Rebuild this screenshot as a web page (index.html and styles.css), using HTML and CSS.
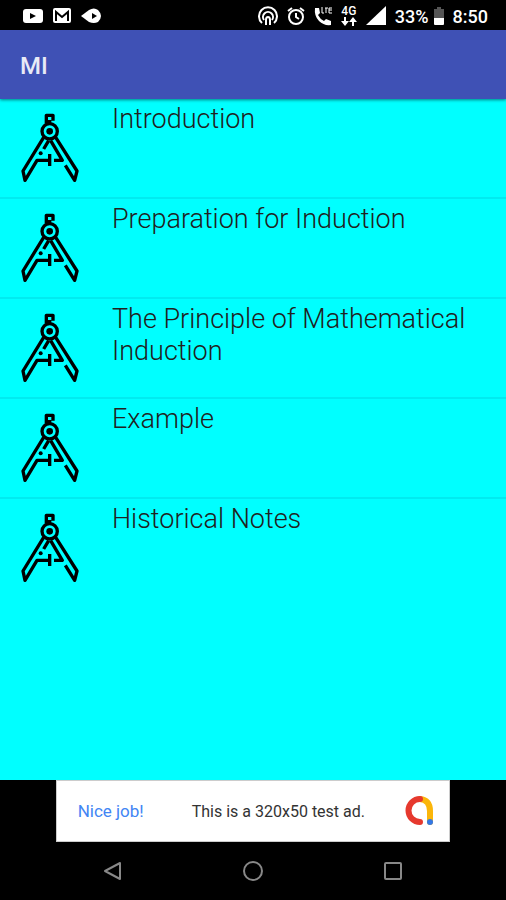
FILE: index.html
```
<!DOCTYPE html>
<html lang="en">

<head>
    <meta charset="utf-8">
    <meta name="viewport" content="width=device-width, initial-scale=1">
    <title>MI</title>
    <link rel="stylesheet" href="styles.css">
</head>

<body>
    <svg class="sprite" aria-hidden="true">
        <symbol id="compass" viewBox="60 36 180 216">
            <g fill="none" stroke="#000" stroke-width="10" stroke-linejoin="round">
                <path d="M139 71V46H159V62M149 60V70" />
                <circle cx="149" cy="94" r="23" />
                <path d="M131 112L69 213L75 241L111 181H149" />
                <path d="M167 112L231 213L224 241L196 196" />
                <path d="M146 122L131 147M152 122L187 181H162M149 162V198" />
            </g>
            <circle cx="149" cy="94" r="10" />
            <circle cx="122" cy="160" r="6" />
        </symbol>
    </svg>

    <div class="status">
        <div class="icons left">
            <svg width="20" height="16" viewBox="0 0 20 16">
                <rect y="1" width="20" height="14" rx="3" fill="#fff" />
                <path d="M7 5L13 8L7 11Z" fill="#000" />
            </svg>
            <svg width="18" height="16" viewBox="0 0 18 16">
                <rect width="18" height="15" rx="2" fill="#fff" />
                <path d="M3 13V4L9 9L15 4V13" fill="none" stroke="#000" stroke-width="2" />
            </svg>
            <svg width="20" height="16" viewBox="0 0 20 16">
                <path d="M0 8L8 2Q13-1 17 2Q20 5 20 8Q20 11 17 14Q13 16 8 14Z" fill="#fff" />
                <path d="M11 5L16 8L11 11Z" fill="#000" />
            </svg>
        </div>
        <div class="icons right">
            <svg width="20" height="20" viewBox="0 0 20 20" fill="none" stroke="#fff" stroke-width="2">
                <path d="M4 17A9 9 0 1 1 16 17M6 14A5 5 0 1 1 14 14" />
                <path d="M8 19V14Q8 11 10 11Q12 11 12 14V19" />
            </svg>
            <svg width="18" height="20" viewBox="0 0 18 20" fill="none" stroke="#fff" stroke-width="2">
                <circle cx="9" cy="11" r="7" />
                <path d="M9 7V11L12 13M1 5L5 2M17 5L13 2" />
            </svg>
            <svg width="18" height="20" viewBox="0 0 18 20">
                <path d="M1 2H5L6 7L4 9Q6 13 10 15L12 13L17 15V19Q10 20 5 15T1 2Z" fill="#fff" />
                <path d="M8 1V7H10M11 2H14M12 2V7M18 2H15V7H18M15 4H18" fill="none" stroke="#fff" />
            </svg>
            <div class="net">
                <span>4G</span>
                <svg width="16" height="9" viewBox="0 0 16 9">
                    <path d="M3 0H5V4H8L4 9L0 4H3ZM11 9H13V5H16L12 0L8 5H11Z" fill="#fff" />
                </svg>
            </div>
            <svg width="20" height="20" viewBox="0 0 20 20">
                <path d="M0 19L20 0V19Z" fill="#fff" />
            </svg>
            <span class="battery">33%</span>
            <svg width="10" height="20" viewBox="0 0 10 20">
                <path d="M3 1H7V3H10V12H0V3H3Z" fill="#555" />
                <path d="M0 12H10V18Q10 19 9 19H1Q0 19 0 18Z" fill="#fff" />
            </svg>
            <span class="time">8:50</span>
        </div>
    </div>

    <header class="bar">
        <h1>MI</h1>
    </header>

    <main>
        <ul class="topics">
            <li><svg class="compass"><use href="#compass" /></svg><a href="#">Introduction</a></li>
            <li><svg class="compass"><use href="#compass" /></svg><a href="#">Preparation for Induction</a></li>
            <li><svg class="compass"><use href="#compass" /></svg><a href="#">The Principle of Mathematical Induction</a></li>
            <li><svg class="compass"><use href="#compass" /></svg><a href="#">Example</a></li>
            <li><svg class="compass"><use href="#compass" /></svg><a href="#">Historical Notes</a></li>
        </ul>
    </main>

    <div class="ad">
        <div class="banner">
            <span class="nice">Nice job!</span>
            <span class="message">This is a 320x50 test ad.</span>
            <svg class="logo" width="30" height="30" viewBox="0 0 30 30" fill="none" stroke-linecap="round">
                <path d="M16 3Q26 4 26 15V26" stroke="#fbb60a" stroke-width="6" />
                <path d="M16 3A11 11 0 1 0 16 26" stroke="#e6392e" stroke-width="6" />
                <circle cx="26" cy="26" r="3" fill="#3478e5" />
            </svg>
        </div>
    </div>

    <nav class="keys">
        <button aria-label="Back">
            <svg width="20" height="20" viewBox="0 0 20 20"><path d="M17 2V18L2 10Z" /></svg>
        </button>
        <button aria-label="Home">
            <svg width="20" height="20" viewBox="0 0 20 20"><circle cx="10" cy="10" r="9" /></svg>
        </button>
        <button aria-label="Recent apps">
            <svg width="20" height="20" viewBox="0 0 20 20"><rect x="2" y="2" width="16" height="16" rx="1" /></svg>
        </button>
    </nav>
</body>

</html>
```
FILE: styles.css
```
* {
    box-sizing: border-box;
}

body {
    margin: 0;
    min-height: 100vh;
    display: flex;
    flex-direction: column;
    background-color: black;
    font-family: Roboto, "Liberation Sans", sans-serif;
}

.sprite {
    position: absolute;
    width: 0;
    height: 0;
}

.status {
    display: flex;
    justify-content: space-between;
    height: 30px;
    padding: 2px 18px 0 23px;
    color: white;
    font-size: 18px;
    font-weight: 500;
}

.icons {
    display: flex;
    align-items: center;
}

.left {
    gap: 10px;
}

.right {
    gap: 9px;
}

.net {
    display: flex;
    flex-direction: column;
    align-items: center;
    font-size: 12px;
    line-height: 11px;
}

.battery {
    margin-right: -4px;
}

.bar {
    position: relative;
    display: flex;
    align-items: center;
    height: 69px;
    padding: 2px 20px 0;
    background-color: #3f51b5;
    box-shadow: 0 1px 3px rgba(0, 0, 0, 0.5);
}

h1 {
    margin: 0;
    color: #e8eaf6;
    font-size: 24px;
    font-weight: 500;
}

main {
    flex: 1;
    background-color: cyan;
}

.topics {
    margin: 0;
    padding: 0;
    list-style: none;
}

.topics li {
    display: flex;
    align-items: flex-start;
    gap: 32px;
    min-height: 100px;
    padding: 4px 20px 0;
    border-bottom: 2px solid #00ebf0;
}

.topics li:last-child {
    border-bottom: 0;
}

.compass {
    flex: none;
    width: 60px;
    height: 72px;
    margin-top: 9px;
}

.topics a {
    color: #212121;
    font-size: 27px;
    font-weight: 300;
    line-height: 32px;
    text-decoration: none;
}

.ad {
    display: flex;
    justify-content: center;
}

.banner {
    display: flex;
    align-items: center;
    width: 78%;
    height: 62px;
    padding: 0 15px 0 21px;
    border: 1px solid #ccc;
    background-color: white;
    color: #333;
    font-size: 16px;
}

.nice {
    color: #4285f4;
    font-size: 17px;
}

.message {
    margin-left: 48px;
}

.logo {
    margin-left: auto;
}

.keys {
    display: flex;
    justify-content: center;
    gap: 100px;
    height: 58px;
}

.keys button {
    width: 40px;
    padding: 0;
    border: 0;
    background: none;
}

.keys svg {
    display: block;
    margin: 0 auto;
    fill: none;
    stroke: #888;
    stroke-width: 2;
    stroke-linejoin: round;
}
```
